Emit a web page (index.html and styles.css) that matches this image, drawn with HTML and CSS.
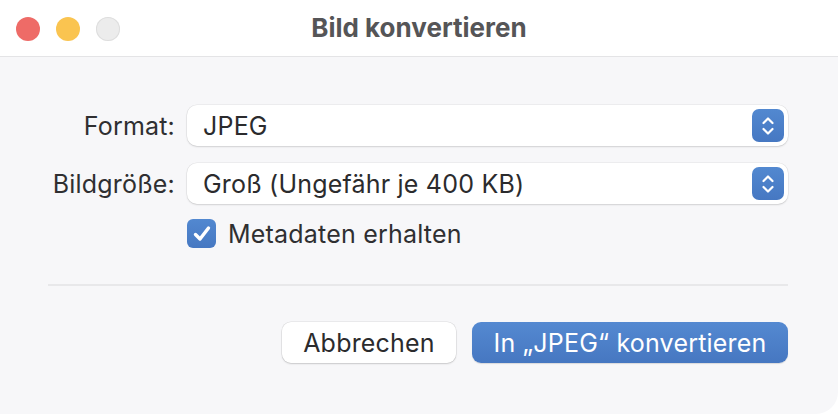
FILE: index.html
```html
<!DOCTYPE html>
<html lang="de">
<head>
<meta charset="utf-8">
<link rel="stylesheet" href="styles.css">
</head>
<body>
<div class="window">
  <div class="titlebar">
    <div class="lights">
      <span class="light red"></span>
      <span class="light yellow"></span>
      <span class="light gray"></span>
    </div>
    <div class="title">Bild konvertieren</div>
  </div>
  <div class="content">
    <div class="form">
      <label class="label">Format:</label>
      <div class="select">
        <span class="value">JPEG</span>
        <span class="stepper">
          <svg width="14" height="22" viewBox="0 0 14 22"><path d="M2.5 8 L7 3.5 L11.5 8 M2.5 14 L7 18.5 L11.5 14" fill="none" stroke="#fff" stroke-width="2.2" stroke-linecap="round" stroke-linejoin="round"/></svg>
        </span>
      </div>
      <label class="label">Bildgröße:</label>
      <div class="select">
        <span class="value">Groß (Ungefähr je 400 KB)</span>
        <span class="stepper">
          <svg width="14" height="22" viewBox="0 0 14 22"><path d="M2.5 8 L7 3.5 L11.5 8 M2.5 14 L7 18.5 L11.5 14" fill="none" stroke="#fff" stroke-width="2.2" stroke-linecap="round" stroke-linejoin="round"/></svg>
        </span>
      </div>
      <span></span>
      <div class="check-row">
        <span class="checkbox">
          <svg width="22" height="22" viewBox="0 0 22 22"><path d="M4.5 11.5 L9 16 L17.5 5" fill="none" stroke="#fff" stroke-width="3.4" stroke-linecap="round" stroke-linejoin="round"/></svg>
        </span>
        <span class="check-label">Metadaten erhalten</span>
      </div>
    </div>
    <div class="separator"></div>
    <div class="buttons">
      <button class="btn">Abbrechen</button>
      <button class="btn primary">In „JPEG“ konvertieren</button>
    </div>
  </div>
</div>
</body>
</html>
```

FILE: styles.css
```css
* { box-sizing: border-box; }
html, body {
  margin: 0;
  padding: 0;
  background: #ffffff;
  font-family: Inter, "Noto Sans", "Liberation Sans", sans-serif;
  color: #2b2b2b;
}
.window {
  width: 838px;
  height: 414px;
  background: #f7f7f9;
  border-bottom-right-radius: 22px;
  overflow: hidden;
}
.titlebar {
  height: 57px;
  background: #ffffff;
  border-bottom: 1px solid #e4e4e6;
  display: flex;
  align-items: center;
  position: relative;
  padding-left: 16px;
}
.lights {
  display: flex;
  gap: 16px;
  padding-top: 1px;
}
.light {
  width: 24px;
  height: 24px;
  border-radius: 50%;
  display: block;
}
.red { background: #ee6b67; }
.yellow { background: #fac450; }
.gray { background: #ececec; box-shadow: inset 0 0 0 1px #dedede; }
.title {
  position: absolute;
  left: 0;
  right: 0;
  top: 0;
  height: 56px;
  line-height: 56px;
  text-align: center;
  font-size: 26px;
  font-weight: 700;
  color: #555557;
  pointer-events: none;
}
.content {
  padding: 48px 50px 0 48px;
}
.form {
  display: grid;
  grid-template-columns: 127px 1fr;
  column-gap: 12px;
  row-gap: 17px;
  align-items: center;
}
.label {
  text-align: right;
  font-size: 25px;
  letter-spacing: 0.2px;
  color: #2f2f31;
  white-space: nowrap;
}
.select {
  height: 41px;
  background: #ffffff;
  border-radius: 10px;
  box-shadow: 0 0 0 0.5px rgba(0,0,0,0.08), 0 1px 2px rgba(0,0,0,0.12);
  display: flex;
  align-items: center;
  justify-content: space-between;
  padding: 0 4px 0 16px;
}
.value {
  font-size: 25px;
  letter-spacing: 0.2px;
  color: #2b2b2d;
}
.stepper {
  width: 32px;
  height: 33px;
  border-radius: 7px;
  background: linear-gradient(#5288d0, #4678c2);
  display: flex;
  align-items: center;
  justify-content: center;
}
.check-row {
  display: flex;
  align-items: center;
  gap: 12px;
  height: 29px;
  margin-top: -2px;
}
.checkbox {
  width: 29px;
  height: 29px;
  border-radius: 6px;
  background: linear-gradient(#5288d0, #4678c2);
  display: flex;
  align-items: center;
  justify-content: center;
}
.check-label {
  font-size: 25px;
  letter-spacing: 0.2px;
  color: #2f2f31;
}
.separator {
  height: 2px;
  background: #e8e8ea;
  margin-top: 36px;
}
.buttons {
  display: flex;
  justify-content: flex-end;
  gap: 16px;
  margin-top: 36px;
}
.btn {
  height: 41px;
  border: none;
  border-radius: 9px;
  font-family: inherit;
  font-size: 25px;
  letter-spacing: 0.2px;
  padding: 0 10px;
  background: #ffffff;
  color: #2b2b2d;
  white-space: nowrap;
  box-shadow: 0 0 0 0.5px rgba(0,0,0,0.1), 0 1px 2px rgba(0,0,0,0.14);
}
.btn:first-child { width: 174px; }
.btn.primary {
  width: 316px;
  background: linear-gradient(#5489d1, #4677c1);
  color: #ffffff;
  box-shadow: 0 1px 1px rgba(0,0,0,0.12);
}
```
